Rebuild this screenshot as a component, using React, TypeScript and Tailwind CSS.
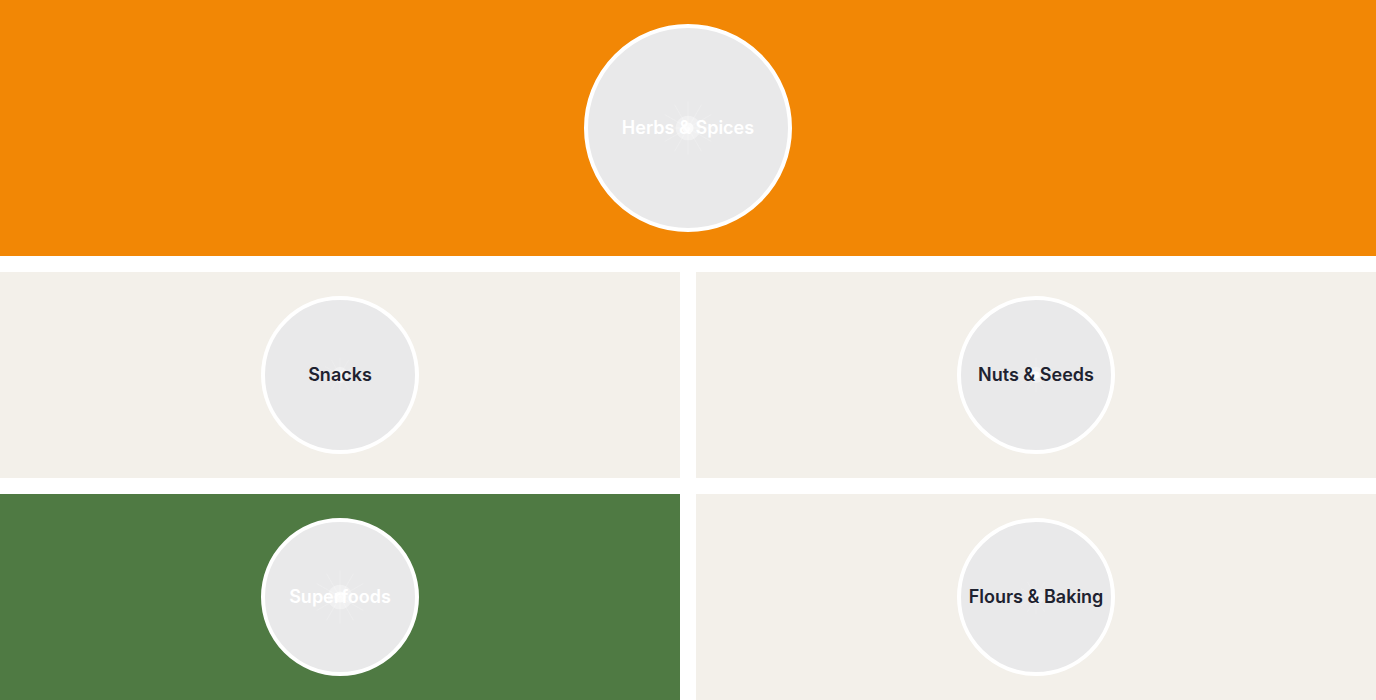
const categories = [
  { name: "Snacks", tone: "light" },
  { name: "Nuts & Seeds", tone: "light" },
  { name: "Superfoods", tone: "green" },
  { name: "Flours & Baking", tone: "light" },
];

// faint placeholder burst that sits behind the label
function Burst({ size }: { size: number }) {
  const rays = Array.from({ length: 12 }, (_, i) => (i * Math.PI) / 6);
  return (
    <svg
      width={size}
      height={size}
      viewBox="0 0 100 100"
      className="absolute left-1/2 top-1/2 -translate-x-1/2 -translate-y-1/2"
    >
      {rays.map((a, i) => (
        <line
          key={i}
          x1={50}
          y1={50}
          x2={50 + Math.cos(a) * 48}
          y2={50 + Math.sin(a) * 48}
          stroke="#ffffff"
          strokeOpacity={0.35}
          strokeWidth={1}
        />
      ))}
      <circle cx={50} cy={50} r={22} fill="#ffffff" fillOpacity={0.35} />
      <circle cx={50} cy={50} r={10} fill="#ffffff" fillOpacity={0.7} />
    </svg>
  );
}

function Bubble({
  label,
  size,
  light,
}: {
  label: string;
  size: string;
  light: boolean;
}) {
  return (
    <div
      className={`relative flex items-center justify-center rounded-full border-4 border-white bg-[#e9e9ea] ${size}`}
    >
      <Burst size={light ? 36 : 56} />
      <span
        className={`relative text-lg font-semibold whitespace-nowrap ${
          light ? "text-[#1e2230]" : "text-white"
        }`}
      >
        {label}
      </span>
    </div>
  );
}

export default function App() {
  return (
    <div className="bg-white font-['Inter','Liberation_Sans',sans-serif] h-[700px] overflow-hidden">
      <div className="flex justify-center bg-[#f28705] py-6">
        <Bubble label="Herbs & Spices" size="w-[208px] h-[208px]" light={false} />
      </div>
      <div className="mt-4 grid grid-cols-2 gap-4">
        {categories.map((c) => (
          <div
            key={c.name}
            className={`flex justify-center py-6 ${
              c.tone === "green" ? "bg-[#4f7a43]" : "bg-[#f3f0ea]"
            }`}
          >
            <Bubble
              label={c.name}
              size="w-[158px] h-[158px]"
              light={c.tone !== "green"}
            />
          </div>
        ))}
      </div>
    </div>
  );
}
